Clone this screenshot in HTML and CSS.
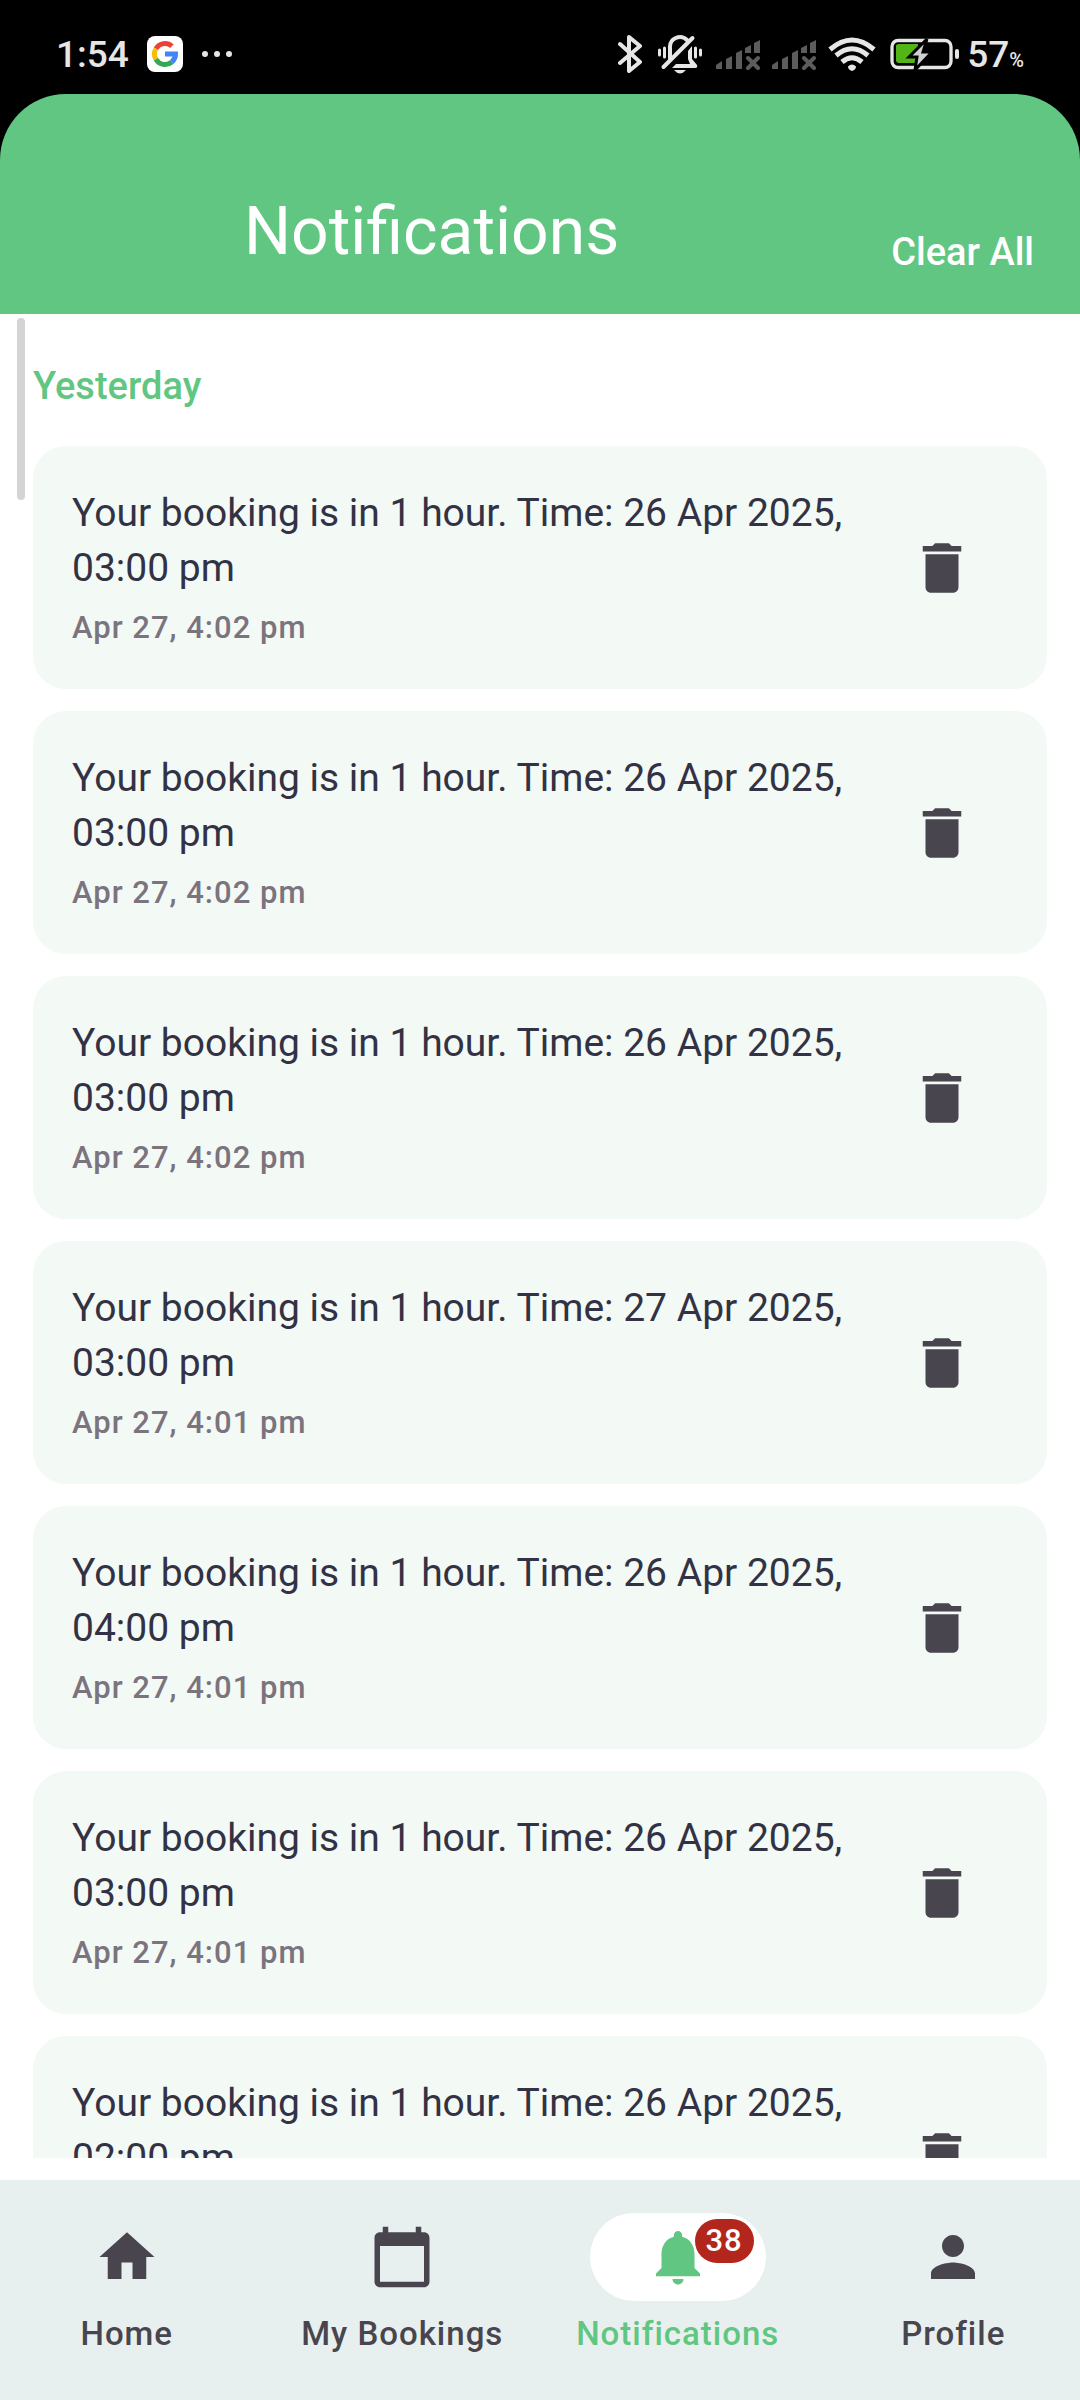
FILE: index.html
```html
<!DOCTYPE html>
<html lang="en">
<head>
<meta charset="utf-8">
<meta name="viewport" content="width=device-width, initial-scale=1">
<title>Notifications</title>
<link rel="stylesheet" href="styles.css">
</head>
<body>
<svg class="sprite" aria-hidden="true">
  <symbol id="trash" viewBox="0 0 24 24"><path d="M6 19c0 1.1.9 2 2 2h8c1.1 0 2-.9 2-2V7H6v12zM19 4h-3.500l-1-1h-5l-1 1H5v2h14V4z"/></symbol>
  <symbol id="signal" viewBox="0 0 44 40">
    <path d="M0 35v-4l6-4v8zM10 35V25l6-3v13zM20 35V19l6-3v19zM29 19v-5l6-3v8zM38 19V9l6-3v13z"/>
    <path d="M32 24l10 10M42 24L32 34" fill="none" stroke="currentColor" stroke-width="4" stroke-linecap="round"/>
  </symbol>
</svg>

<div class="status">
  <div class="status-left">
    <span class="clock">1:54</span>
    <svg class="google" viewBox="0 0 36 36" role="img" aria-label="Google">
      <rect width="36" height="36" rx="8" fill="#fff"/>
      <g fill="none" stroke-width="5">
        <path d="M8.900 12.700A10.500 10.500 0 0 1 25 10.200" stroke="#ea4335"/>
        <path d="M8.900 23.300A10.500 10.500 0 0 1 8.900 12.700" stroke="#fbbc05"/>
        <path d="M24.800 26A10.500 10.500 0 0 1 8.900 23.300" stroke="#34a853"/>
        <path d="M18 18h10.500A10.500 10.500 0 0 1 24.800 26" stroke="#4285f4"/>
      </g>
    </svg>
    <svg class="dots" viewBox="0 0 32 8"><circle cx="4" cy="4" r="3"/><circle cx="16" cy="4" r="3"/><circle cx="28" cy="4" r="3"/></svg>
  </div>
  <div class="status-right">
    <svg class="w28" viewBox="0 0 28 40"><path d="M2 10l20 18-11 9V3l11 9L2 29" fill="none" stroke="currentColor" stroke-width="4" stroke-linejoin="round" stroke-linecap="round"/></svg>
    <svg class="w46" viewBox="0 0 46 40">
      <g fill="none" stroke="currentColor" stroke-linecap="round">
        <path d="M1.500 16v5M6.500 14v9M37.500 14v9M42.500 16v5" stroke-width="3"/>
        <path d="M12 25V14a10 10 0 0 1 17-8" stroke-width="4"/>
        <path d="M5.500 33L34.500 4" stroke-width="4"/>
      </g>
      <path d="M30 17l4-5v13l5 6q1 3-2 3H14l4-4h14l-2-5z"/>
      <path d="M16 36h12q-3 3.500-6 3.500T16 36z"/>
    </svg>
    <svg class="w44 dim"><use href="#signal"/></svg>
    <svg class="w44 dim"><use href="#signal"/></svg>
    <svg class="w48" viewBox="0 0 48 40">
      <g fill="none" stroke="currentColor" stroke-width="5"><path d="M2 15.500Q24-3.500 46 15.500M8 21.500Q24 8 40 21.500M14 28Q24 19.500 34 28"/></g>
      <path d="M20 32.500q4-4 8 0 0 3-4 4.500-4-1.500-4-4.500z"/>
    </svg>
    <svg class="w72" viewBox="0 0 72 40">
      <rect x="4" y="6.500" width="59" height="27" rx="6" fill="none" stroke="currentColor" stroke-width="3.300"/>
      <rect x="67" y="15" width="4" height="10" rx="2"/>
      <path d="M8 12q0-2 3-2h19v19H11q-3 0-3-3z" fill="#52b416"/>
      <path d="M39 5L21 23h8l-2 13 17-18h-9z" fill="#d0d0d0" stroke="#000" stroke-width="3"/>
    </svg>
    <span class="battery">57<small>%</small></span>
  </div>
</div>

<div class="header-wrap">
  <header class="header">
    <h1>Notifications</h1>
    <button class="clear" type="button">Clear All</button>
  </header>
</div>

<main class="list">
  <div class="scrollbar"></div>
  <h2>Yesterday</h2>
  <ul>
    <li class="card"><div class="text"><p>Your booking is in 1 hour. Time: 26 Apr 2025, 03:00 pm</p><time>Apr 27, 4:02 pm</time></div><button class="delete" type="button" aria-label="Delete"><svg><use href="#trash"/></svg></button></li>
    <li class="card"><div class="text"><p>Your booking is in 1 hour. Time: 26 Apr 2025, 03:00 pm</p><time>Apr 27, 4:02 pm</time></div><button class="delete" type="button" aria-label="Delete"><svg><use href="#trash"/></svg></button></li>
    <li class="card"><div class="text"><p>Your booking is in 1 hour. Time: 26 Apr 2025, 03:00 pm</p><time>Apr 27, 4:02 pm</time></div><button class="delete" type="button" aria-label="Delete"><svg><use href="#trash"/></svg></button></li>
    <li class="card"><div class="text"><p>Your booking is in 1 hour. Time: 27 Apr 2025, 03:00 pm</p><time>Apr 27, 4:01 pm</time></div><button class="delete" type="button" aria-label="Delete"><svg><use href="#trash"/></svg></button></li>
    <li class="card"><div class="text"><p>Your booking is in 1 hour. Time: 26 Apr 2025, 04:00 pm</p><time>Apr 27, 4:01 pm</time></div><button class="delete" type="button" aria-label="Delete"><svg><use href="#trash"/></svg></button></li>
    <li class="card"><div class="text"><p>Your booking is in 1 hour. Time: 26 Apr 2025, 03:00 pm</p><time>Apr 27, 4:01 pm</time></div><button class="delete" type="button" aria-label="Delete"><svg><use href="#trash"/></svg></button></li>
    <li class="card"><div class="text"><p>Your booking is in 1 hour. Time: 26 Apr 2025, 02:00 pm</p><time>Apr 27, 4:01 pm</time></div><button class="delete" type="button" aria-label="Delete"><svg><use href="#trash"/></svg></button></li>
  </ul>
</main>

<nav class="nav">
  <a href="#home"><span class="pill"><svg viewBox="0 0 24 24"><path d="M10 20v-6h4v6h5v-8h3L12 3 2 12h3v8z"/></svg></span>Home</a>
  <a href="#bookings"><span class="pill"><svg viewBox="0 0 24 24"><path d="M20 3h-1V1h-2v2H7V1H5v2H4c-1.100 0-2 .9-2 2v16c0 1.100.9 2 2 2h16c1.100 0 2-.9 2-2V5c0-1.100-.9-2-2-2zm0 18H4V8h16v13z"/></svg></span>My Bookings</a>
  <a href="#notifications" class="active" aria-current="page"><span class="pill"><svg viewBox="0 0 24 24"><path d="M12 22c1.100 0 2-.9 2-2h-4c0 1.100.89 2 2 2zm6-6v-5c0-3.070-1.640-5.640-4.500-6.320V4c0-.83-.67-1.500-1.500-1.500s-1.500.67-1.500 1.500v.68C7.630 5.360 6 7.920 6 11v5l-2 2v1h16v-1l-2-2z"/></svg><span class="badge">38</span></span>Notifications</a>
  <a href="#profile"><span class="pill"><svg viewBox="0 0 24 24"><path d="M12 12c2.210 0 4-1.790 4-4s-1.790-4-4-4-4 1.790-4 4 1.790 4 4 4zm0 2c-2.670 0-8 1.340-8 4v2h16v-2c0-2.660-5.330-4-8-4z"/></svg></span>Profile</a>
</nav>
</body>
</html>
```

FILE: styles.css
```css
* { box-sizing: border-box; }
body {
  margin: 0;
  height: 100vh;
  display: flex;
  flex-direction: column;
  background: #fff;
  font-family: Roboto, "Liberation Sans", sans-serif;
}
h1, h2, p, ul { margin: 0; padding: 0; }
button { border: 0; background: none; font-family: inherit; }
svg { display: block; fill: currentColor; }
.sprite { position: absolute; width: 0; height: 0; }

.status {
  display: flex;
  justify-content: space-between;
  align-items: center;
  height: 94px;
  padding: 14px 56px 0;
  background: #000;
  color: #e6e6e6;
  font-size: 37px;
  font-weight: 500;
  line-height: 44px;
}
.status-left { display: flex; align-items: center; gap: 18px; }
.status-right { display: flex; align-items: center; gap: 12px; }
.status-right svg { height: 40px; }
.clock, .battery { padding-top: 2px; }
.google { width: 36px; height: 36px; }
.dots { width: 32px; height: 8px; }
.w28 { width: 28px; }
.w44 { width: 44px; }
.w46 { width: 46px; }
.w48 { width: 48px; }
.w72 { width: 72px; }
.dim { color: #5c5c5c; }
.battery { margin-left: -5px; }
.battery small { font-size: 20px; line-height: 20px; }

.header-wrap { background: #000; }
.header {
  display: flex;
  align-items: flex-end;
  padding-top: 94px;
  border-radius: 66px 66px 0 0;
  background: #61c681;
  color: #fff;
}
.header h1 {
  flex: 1;
  margin-bottom: 38px;
  text-align: center;
  font-size: 66px;
  font-weight: 400;
  line-height: 88px;
}
.clear {
  padding: 0 46px 34px 28px;
  color: #fff;
  font-size: 38px;
  font-weight: 500;
  line-height: 55px;
}

.list {
  position: relative;
  flex: 1;
  min-height: 0;
  overflow: hidden;
  margin-bottom: 22px;
  padding: 45px 33px 0;
}
.scrollbar {
  position: absolute;
  top: 4px;
  left: 17px;
  width: 8px;
  height: 182px;
  border-radius: 4px;
  background: #d4d4d4;
}
.list h2 {
  margin-bottom: 32px;
  color: #61c681;
  font-size: 38px;
  font-weight: 500;
  line-height: 55px;
}
.list ul { display: flex; flex-direction: column; gap: 22px; list-style: none; }
.card {
  display: flex;
  align-items: center;
  padding: 39px;
  border-radius: 33px;
  background: #f3f9f5;
}
.text { flex: 1; display: flex; flex-direction: column; gap: 10px; padding-top: 1px; }
.text p { color: #323244; font-size: 39px; line-height: 55px; }
.text time {
  color: #7b747e;
  font-size: 31px;
  font-weight: 500;
  line-height: 44px;
  letter-spacing: 1px;
}
.delete { display: grid; place-items: center; width: 132px; height: 132px; padding: 0; color: #49454f; }
.delete svg { width: 66px; height: 66px; }

.nav {
  display: grid;
  grid-template-columns: repeat(4, minmax(0, 1fr));
  gap: 22px;
  padding: 33px 0 44px;
  background: #e7f0ee;
}
.nav a {
  display: flex;
  flex-direction: column;
  align-items: center;
  gap: 11px;
  color: #49454f;
  font-size: 33px;
  font-weight: 500;
  line-height: 44px;
  letter-spacing: 1px;
  text-decoration: none;
  white-space: nowrap;
}
.pill {
  position: relative;
  display: grid;
  place-items: center;
  width: 176px;
  height: 88px;
  border-radius: 44px;
}
.pill svg { width: 66px; height: 66px; }
.nav .active { color: #61c681; }
.active .pill { background: #fff; }
.badge {
  position: absolute;
  top: 6px;
  right: 12px;
  padding: 0 11px;
  border-radius: 22px;
  background: #b3261e;
  color: #fff;
  font-size: 31px;
}
```
